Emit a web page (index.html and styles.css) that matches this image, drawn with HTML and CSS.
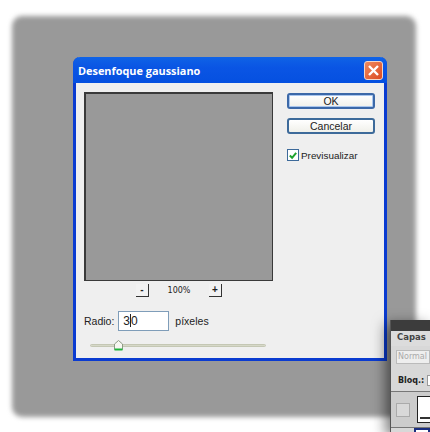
FILE: index.html
```html
<!DOCTYPE html>
<html lang="es">
<head>
    <meta charset="UTF-8">
    <title>Desenfoque gaussiano</title>
    <link rel="stylesheet" href="styles.css">
</head>
<body>
<div class="backdrop"></div>
<div class="dialog">
    <div class="titlebar">
        <span class="title">Desenfoque gaussiano</span>
        <span class="close">
            <svg width="13" height="13" viewBox="0 0 13 13"><path d="M2 2 L11 11 M11 2 L2 11" stroke="#fff" stroke-width="2.4" fill="none"/></svg>
        </span>
    </div>
    <div class="content">
        <div class="left">
            <div class="preview"></div>
            <div class="zoom">
                <span class="zoombtn">-</span>
                <span class="zoomval">100%</span>
                <span class="zoombtn">+</span>
            </div>
            <div class="radius">
                <span>Radio:</span>
                <span class="input">3<i class="caret"></i>0</span>
                <span class="unit">píxeles</span>
            </div>
            <div class="slider">
                <div class="thumb">
                    <svg width="11" height="12" viewBox="0 0 11 12"><path d="M1.5 10.5 V5 L5.5 1.5 L9.5 5 V10.5 Z" fill="#f7f7f2" stroke="#8e9a86"/><path d="M1.5 10.5 H9.5" stroke="#1fb53a" stroke-width="2"/></svg>
                </div>
            </div>
        </div>
        <div class="right">
            <div class="btn btn-default">OK</div>
            <div class="btn">Cancelar</div>
            <div class="check">
                <span class="box">
                    <svg width="11" height="11" viewBox="0 0 11 11"><path d="M2 5.5 L4.5 8 L9 2.5" stroke="#1fa32e" stroke-width="2.2" fill="none"/></svg>
                </span>
                <span>Previsualizar</span>
            </div>
        </div>
    </div>
</div>
<div class="layers">
    <div class="layers-top"></div>
    <div class="layers-tab"><span class="tab">Capas</span></div>
    <div class="layers-mode">Normal</div>
    <div class="layers-lock"><b>Bloq.:</b><span class="lockbox"></span></div>
    <div class="layers-row">
        <span class="eye"></span>
        <span class="thumbnail"><i class="thumbline"></i></span>
    </div>
    <div class="layers-sel"></div>
</div>
</body>
</html>
```
FILE: styles.css
```css
*{margin:0;padding:0;box-sizing:border-box;}
html,body{width:430px;height:432px;overflow:hidden;background:#fff;}
body{position:relative;font-family:"Liberation Sans",Arial,sans-serif;font-size:11px;color:#222;}

.backdrop{
    position:absolute;left:12px;top:16px;width:404px;height:401px;
    background:#999;
    border-radius:10px;
    filter:blur(2.5px);
}

.dialog{
    position:absolute;left:73px;top:57px;width:314px;height:304px;
    background:#efefef;
    border:3px solid #0a3bd0;
    border-top:0;
    border-radius:7px 7px 0 0;
    display:flex;
    flex-direction:column;
}
.titlebar{
    height:26px;
    margin:0 -3px;
    padding:0 4px 0 5px;
    background:linear-gradient(#0f63e6,#0a55e4 40%,#0550e0);
    border-radius:7px 7px 0 0;
    display:flex;
    align-items:center;
    justify-content:space-between;
}
.title{
    font:bold 10.9px "Open Sans","DejaVu Sans",sans-serif;
    color:#fff;
}
.close{
    width:19px;height:19px;
    border:1px solid #f3d6c8;
    border-radius:3px;
    background:linear-gradient(135deg,#ef8a5e,#dc4a22);
    display:flex;align-items:center;justify-content:center;
}

.content{
    flex:1;
    display:flex;
    padding:9px 0 0 8px;
}
.left{width:189px;}
.preview{
    width:189px;height:189px;
    background:#999;
    border:1px solid #3a3a3a;
    border-top-width:2px;border-left-width:2px;
}
.zoom{
    display:flex;
    align-items:center;
    margin:3px 0 0 52px;
}
.zoombtn{
    width:13px;height:13px;
    background:#f2f2f2;
    border-right:1px solid #333;
    border-bottom:1px solid #333;
    text-align:center;
    font:bold 10px/11px "Liberation Sans",sans-serif;
}
.zoomval{
    width:60px;
    text-align:center;
    font-size:8px;
    font-family:"DejaVu Sans",sans-serif;
}
.radius{
    display:flex;
    align-items:center;
    margin-top:14px;
    font-size:10.5px;
}
.input{
    width:51px;height:20px;
    margin-left:4px;
    padding-left:4px;
    background:#fff;
    border:1px solid #7f9db9;
    line-height:18px;
    font-size:12px;
}
.caret{
    display:inline-block;
    width:1px;height:13px;
    background:#222;
    vertical-align:-2px;
}
.unit{margin-left:6px;}
.slider{
    position:relative;
    width:176px;height:3px;
    margin:13px 0 0 6px;
    background:#d6d8c8;
    border:1px solid #c4c7b4;
    border-radius:2px;
}
.thumb{
    position:absolute;left:22px;top:-6px;
    line-height:0;
}

.right{
    margin-left:14px;
    width:88px;
    padding-top:1px;
    font-family:"Liberation Sans",sans-serif;
}
.btn{
    height:16px;
    width:88px;
    margin-bottom:9px;
    border:2px solid #3d6a9a;
    border-radius:3px;
    background:linear-gradient(#fff,#f0f0ea);
    text-align:center;
    font-size:10.5px;
    line-height:12px;
}
.btn-default{border-color:#3b68a8;box-shadow:inset 0 0 0 1px #a9c6ee;}
.check{
    display:flex;
    align-items:center;
    gap:2px;
    margin-top:15px;
    font-size:9.9px;
}
.box{
    width:12px;height:12px;
    background:#fff;
    border:1px solid #3d6a9a;
    display:flex;align-items:center;justify-content:center;
}

.layers{
    position:absolute;left:390px;top:320px;width:40px;height:112px;
    background:#d8d8d8;
    border-left:1px solid #555;
    box-shadow:-4px 4px 14px rgba(0,0,0,0.55);
    font-family:"DejaVu Sans",sans-serif;
    font-size:8.5px;
}
.layers-top{height:11px;background:#3c3c3c;}
.layers-tab{height:15px;background:#dcdcdc;padding:1px 0 0 6px;font-weight:bold;color:#444;}
.layers-mode{
    margin:4px 0 0 5px;height:14px;
    background:#eee;border:1px solid #bbb;
    color:#aaa;font-size:8px;
    padding-left:1px;line-height:12px;
    overflow:hidden;white-space:nowrap;
}
.layers-lock{display:flex;align-items:center;gap:3px;height:11px;margin:11px 0 0 7px;color:#222;font-size:8px;overflow:hidden;}
.lockbox{width:9px;height:11px;background:#fff;border:1px solid #999;flex:none;}
.layers-row{
    display:flex;gap:7px;
    height:37px;margin-top:5px;
    padding:4px 0 0 5px;
    background:#ccc;
    border-top:1px solid #777;
    border-bottom:1px solid #777;
}
.eye{width:14px;height:14px;margin-top:7px;background:#d8d8d8;border:1px solid #aaa;flex:none;}
.thumbnail{position:relative;width:20px;height:27px;background:#fff;border:1px solid #222;flex:none;}
.thumbline{position:absolute;left:2px;right:0;bottom:3px;height:2px;border:1px solid #333;border-right:0;}
.layers-sel{height:5px;margin-left:23px;background:#fff;border:2px solid #1a2e80;border-bottom:0;}
```
